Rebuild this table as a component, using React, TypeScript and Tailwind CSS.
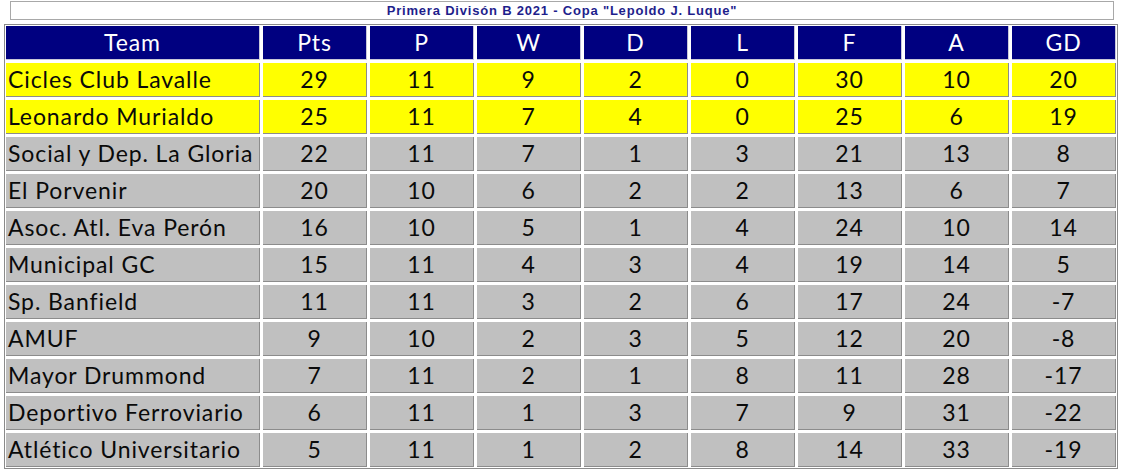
const rows: [string, number, number, number, number, number, number, number, number][] = [
  ["Cicles Club Lavalle", 29, 11, 9, 2, 0, 30, 10, 20],
  ["Leonardo Murialdo", 25, 11, 7, 4, 0, 25, 6, 19],
  ["Social y Dep. La Gloria", 22, 11, 7, 1, 3, 21, 13, 8],
  ["El Porvenir", 20, 10, 6, 2, 2, 13, 6, 7],
  ["Asoc. Atl. Eva Perón", 16, 10, 5, 1, 4, 24, 10, 14],
  ["Municipal GC", 15, 11, 4, 3, 4, 19, 14, 5],
  ["Sp. Banfield", 11, 11, 3, 2, 6, 17, 24, -7],
  ["AMUF", 9, 10, 2, 3, 5, 12, 20, -8],
  ["Mayor Drummond", 7, 11, 2, 1, 8, 11, 28, -17],
  ["Deportivo Ferroviario", 6, 11, 1, 3, 7, 9, 31, -22],
  ["Atlético Universitario", 5, 11, 1, 2, 8, 14, 33, -19],
];

const headers = ["Team", "Pts", "P", "W", "D", "L", "F", "A", "GD"];

export default function App() {
  return (
    <div className="w-[1121px] h-[469px] bg-white overflow-hidden font-['Lato',sans-serif]">
      <div className="ml-[10px] mt-px w-[1104px] h-[19px] border border-[#a8a8a8] flex items-center justify-center">
        <span className="font-['Liberation_Sans',Arial,sans-serif] font-bold text-[13px] tracking-[0.8px] leading-none text-[#1e1e8c]">
          Primera Divisón B 2021 - Copa "Lepoldo J. Luque"
        </span>
      </div>
      <div className="ml-1 mt-1 w-[1114px] border border-[#8a8a8a] p-px grid grid-cols-[254px_repeat(8,104px)] auto-rows-[34px] gap-[3px]">
        {headers.map((h) => (
          <div
            key={h}
            className="bg-[#000080] border-r border-b border-[#c8c8d8] text-white text-[23px] tracking-[0.9px] flex items-center justify-center"
          >
            {h}
          </div>
        ))}
        {rows.map((r, i) => {
          const bg = i < 2 ? "bg-[#ffff00]" : "bg-[#c0c0c0]";
          return r.map((v, j) => (
            <div
              key={`${i}-${j}`}
              className={`${bg} border-r border-b border-[#8c8c8c] text-[#0a0a0a] text-[23px] tracking-[0.9px] flex items-center ${
                j === 0 ? "pl-[2px] whitespace-nowrap" : "justify-center"
              }`}
            >
              {v}
            </div>
          ));
        })}
      </div>
    </div>
  );
}
